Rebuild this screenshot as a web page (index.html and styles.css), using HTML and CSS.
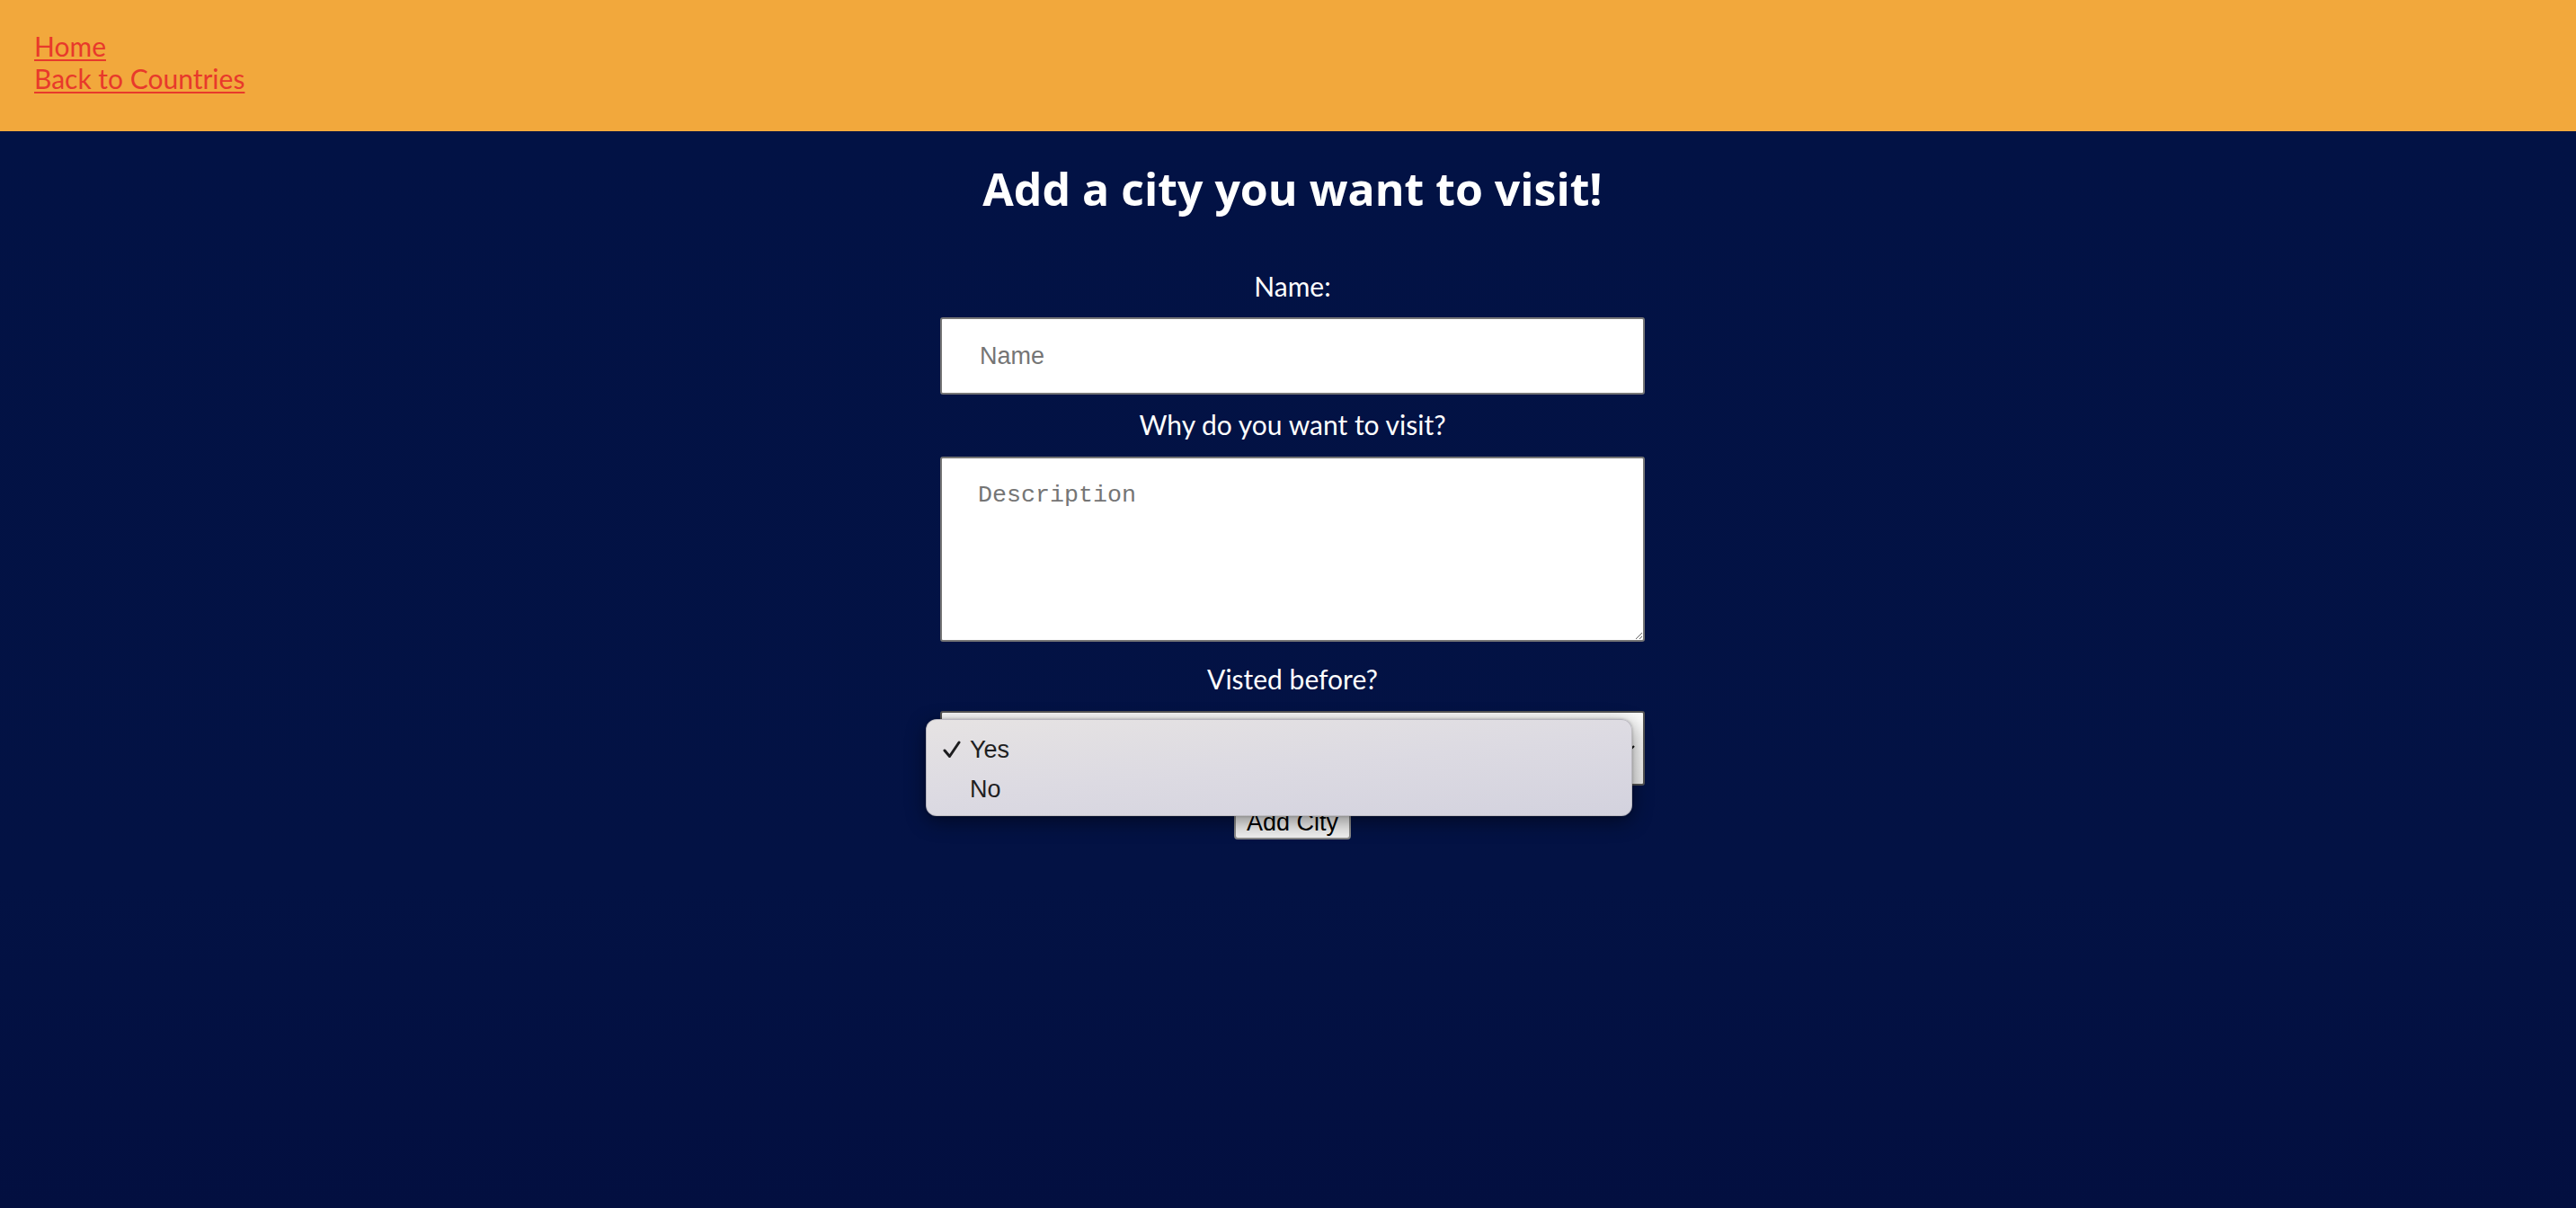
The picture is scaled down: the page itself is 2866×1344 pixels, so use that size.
FILE: index.html
```html
<!DOCTYPE html>
<html lang="en">
<head>
<meta charset="utf-8">
<title>Add a city</title>
<link rel="stylesheet" href="styles.css">
</head>
<body>
<header class="topbar">
  <a href="#" class="nav-link">Home</a>
  <a href="#" class="nav-link">Back to Countries</a>
</header>
<main class="page">
  <h2 class="title">Add a city you want to visit!</h2>
  <form class="city-form">
    <label class="field-label label-name" for="name">Name:</label>
    <input id="name" class="text-input" type="text" placeholder="Name">
    <label class="field-label label-why" for="desc">Why do you want to visit?</label>
    <textarea id="desc" class="text-area" placeholder="Description"></textarea>
    <label class="field-label label-visited">Visted before?</label>
    <div class="select-wrap">
      <div class="select-box">
        <span class="select-value">Yes</span>
        <svg class="select-arrow" width="16" height="12" viewBox="0 0 16 12"><path d="M2 3 L8 9 L14 3" fill="none" stroke="#111" stroke-width="2.2"/></svg>
      </div>
      <div class="select-popup">
        <div class="option">
          <svg class="check" width="20" height="20" viewBox="0 0 20 20"><path d="M2 11 L7.5 17.5 L18 2" fill="none" stroke="#1d1d1f" stroke-width="3" stroke-linecap="round" stroke-linejoin="round"/></svg>
          <span>Yes</span>
        </div>
        <div class="option">
          <span class="check-space"></span>
          <span>No</span>
        </div>
      </div>
    </div>
    <button type="button" class="submit">Add City</button>
  </form>
</main>
</body>
</html>
```
FILE: styles.css
```css
html, body {
  margin: 0;
  padding: 0;
}
body {
  background: #021245;
  font-family: "Lato", "Open Sans", sans-serif;
}
.topbar {
  background: #f2a83c;
  padding: 33px 38px 41px;
  height: 146px;
  box-sizing: border-box;
}
.nav-link {
  display: block;
  width: max-content;
  color: #e8392b;
  font-size: 30px;
  line-height: 36px;
  text-decoration: underline;
  text-decoration-thickness: 2px;
  text-underline-offset: 3px;
}
.page {
  min-height: calc(100vh - 146px);
  box-sizing: border-box;
  padding: 36px 0 0 10px;
  background: linear-gradient(180deg, #021245 0%, #031244 70%, #030f40 100%);
}
.title {
  margin: 0;
  text-align: center;
  color: #ffffff;
  font-family: "Open Sans", "Lato", sans-serif;
  font-size: 50px;
  line-height: 56px;
  font-weight: 700;
}
.city-form {
  width: 784px;
  margin: 0 auto;
  display: flex;
  flex-direction: column;
}
.field-label {
  display: block;
  text-align: center;
  color: #ffffff;
  font-size: 30px;
  line-height: 36px;
}
.label-name { margin-top: 62px; }
.label-why { margin-top: 15px; }
.label-visited { margin-top: 23px; }
.text-input {
  display: block;
  margin-top: 17px;
  height: 86px;
  box-sizing: border-box;
  border: 2px solid #767676;
  border-radius: 3px;
  padding: 0 0 0 42px;
  font-family: "Liberation Sans", Arial, sans-serif;
  font-size: 27px;
  background: #fff;
}
.text-input::placeholder { color: #757575; }
.text-area {
  display: block;
  margin-top: 18px;
  height: 206px;
  box-sizing: border-box;
  border: 2px solid #767676;
  border-radius: 3px;
  padding: 26px 0 0 40px;
  font-family: "Liberation Mono", "Courier New", monospace;
  font-size: 26.67px;
  background: #fff;
  resize: both;
}
.text-area::placeholder { color: #757575; }
.select-wrap {
  position: relative;
  margin-top: 18px;
}
.select-box {
  height: 83px;
  box-sizing: border-box;
  border: 2px solid #555555;
  border-radius: 3px;
  background: linear-gradient(180deg, #fbfbfb 0%, #ececec 100%);
  display: flex;
  align-items: center;
  justify-content: space-between;
  padding: 0 8px 0 30px;
  font-family: "Liberation Sans", Arial, sans-serif;
  font-size: 27px;
  color: #111;
}
.select-popup {
  position: absolute;
  left: -16px;
  top: 9px;
  width: 786px;
  height: 108px;
  box-sizing: border-box;
  border-radius: 12px;
  border: 1px solid rgba(120, 120, 130, 0.35);
  background: linear-gradient(175deg, #e6e3e3 0%, #dcdae2 50%, #d3d2de 100%);
  box-shadow: 0 6px 22px rgba(0, 0, 0, 0.45), 0 0 3px rgba(0, 0, 0, 0.25);
  padding-top: 11px;
  font-family: "Liberation Sans", Arial, sans-serif;
  font-size: 27px;
  color: #1f1f22;
  z-index: 2;
}
.option {
  display: flex;
  align-items: center;
  height: 44px;
  padding-left: 18px;
}
.check {
  width: 20px;
  height: 20px;
  margin-right: 10px;
  flex: none;
}
.check-space {
  width: 20px;
  margin-right: 10px;
  flex: none;
}
.submit {
  align-self: center;
  margin-top: 22px;
  width: 130px;
  height: 38px;
  box-sizing: border-box;
  padding: 0;
  border: 2px solid #8a8a8a;
  border-radius: 4px;
  background: #efefef;
  font-family: "Liberation Sans", Arial, sans-serif;
  font-size: 27px;
  line-height: 32px;
  color: #000;
}
```
